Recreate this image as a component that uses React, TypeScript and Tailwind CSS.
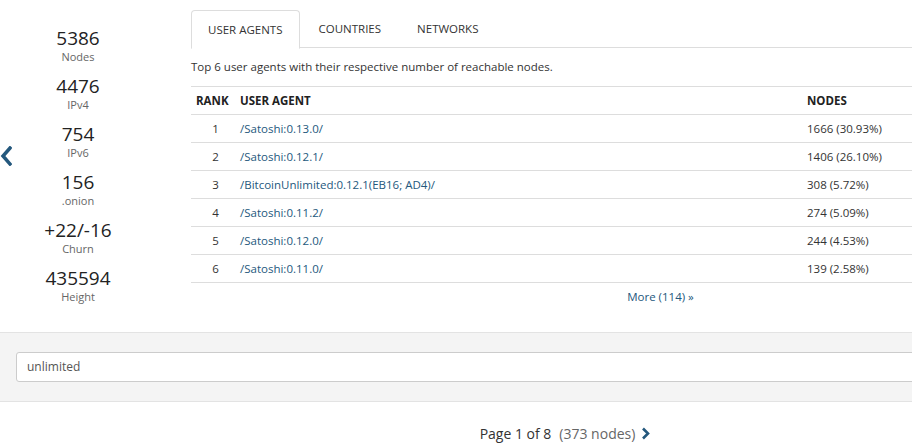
import React from 'react';

const stats = [
  { value: '5386', label: 'Nodes' },
  { value: '4476', label: 'IPv4' },
  { value: '754', label: 'IPv6' },
  { value: '156', label: '.onion' },
  { value: '+22/-16', label: 'Churn' },
  { value: '435594', label: 'Height' },
];

const agents = [
  { rank: 1, name: '/Satoshi:0.13.0/', nodes: '1666 (30.93%)' },
  { rank: 2, name: '/Satoshi:0.12.1/', nodes: '1406 (26.10%)' },
  { rank: 3, name: '/BitcoinUnlimited:0.12.1(EB16; AD4)/', nodes: '308 (5.72%)' },
  { rank: 4, name: '/Satoshi:0.11.2/', nodes: '274 (5.09%)' },
  { rank: 5, name: '/Satoshi:0.12.0/', nodes: '244 (4.53%)' },
  { rank: 6, name: '/Satoshi:0.11.0/', nodes: '139 (2.58%)' },
];

export default function App() {
  return (
    <div className="w-[912px] h-[448px] overflow-hidden bg-white text-[#333]" style={{ fontFamily: '"Open Sans", "Noto Sans", sans-serif' }}>
      <div className="w-[1130px]">
        {/* top: stats + tabs */}
        <div className="relative flex h-[332px]">
          <svg className="absolute left-0 top-[146px]" width="12" height="20" viewBox="0 0 12 20">
            <path d="M10 2 L3 10 L10 18" fill="none" stroke="#24587d" strokeWidth="3.5" strokeLinecap="square" />
          </svg>

          <div className="w-[156px] pt-[28px] flex flex-col gap-[12px] text-center">
            {stats.map(s => (
              <div key={s.label}>
                <div className="text-[19px] leading-[20px] text-[#222]">{s.value}</div>
                <div className="mt-[2px] text-[11px] leading-[14px] text-[#666]">{s.label}</div>
              </div>
            ))}
          </div>

          <div className="ml-[35px] flex-1 pt-[10px]">
            <div className="flex border-b border-[#ddd] h-[38px]">
              <div className="-mb-px h-[39px] px-4 border border-[#ddd] border-b-white bg-white rounded-t-[4px] text-[11.5px] flex items-center text-[#333]">USER AGENTS</div>
              <div className="ml-[2px] px-4 border border-transparent text-[11.5px] flex items-center text-[#333]">COUNTRIES</div>
              <div className="ml-[2px] px-4 border border-transparent text-[11.5px] flex items-center text-[#333]">NETWORKS</div>
            </div>

            <p className="mt-[11px] text-[11.5px] leading-[16px] text-[#333]">Top 6 user agents with their respective number of reachable nodes.</p>

            <table className="mt-[11px] w-full border-collapse table-fixed text-[11.5px]">
              <colgroup>
                <col className="w-[44px]" />
                <col className="w-[567px]" />
                <col />
              </colgroup>
              <thead>
                <tr className="border-t border-b border-[#ddd] h-[28px]">
                  <th className="pl-[5px] text-left font-bold text-[#222]">RANK</th>
                  <th className="pl-[5px] text-left font-bold text-[#222]">USER AGENT</th>
                  <th className="pl-[5px] text-left font-bold text-[#222]">NODES</th>
                </tr>
              </thead>
              <tbody>
                {agents.map(a => (
                  <tr key={a.rank} className="border-b border-[#ddd] h-[28px]">
                    <td className="pl-[5px] text-center">{a.rank}</td>
                    <td className="pl-[5px] text-[#24587d]">{a.name}</td>
                    <td className="pl-[5px] text-[#333]">{a.nodes}</td>
                  </tr>
                ))}
              </tbody>
            </table>

            <div className="mt-[5px] text-center text-[11.5px] text-[#24587d]">More (114) &raquo;</div>
          </div>
        </div>

        {/* search band */}
        <div className="border-t border-b border-[#e3e3e3] bg-[#f4f4f4] h-[70px] px-4 pt-[19px]">
          <div className="h-[30px] bg-white border border-[#ccc] rounded-[3px] px-[10px] flex items-center text-[12px] text-[#555]">unlimited</div>
        </div>

        {/* pagination */}
        <div className="mt-[21px] flex items-center justify-center text-[14px]">
          <span className="text-[#333]">Page 1 of 8</span>
          <span className="ml-[8px] text-[#666]">(373 nodes)</span>
          <svg className="ml-[6px]" width="9" height="13" viewBox="0 0 9 13">
            <path d="M2 1.5 L7 6.5 L2 11.5" fill="none" stroke="#24587d" strokeWidth="2.6" />
          </svg>
        </div>
      </div>
    </div>
  );
}
